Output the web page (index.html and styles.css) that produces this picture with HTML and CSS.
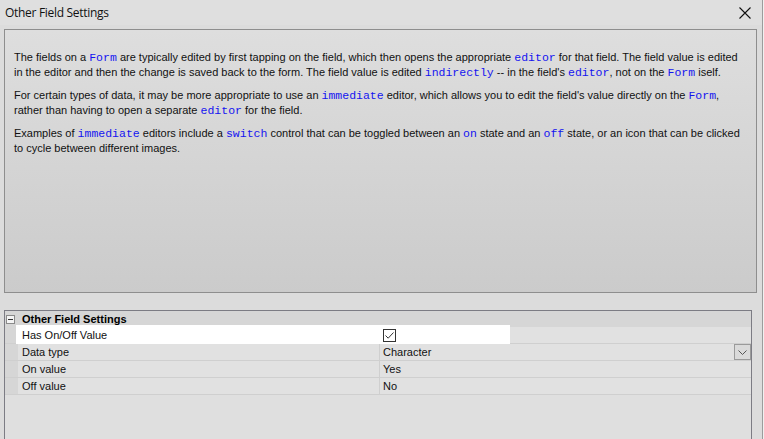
FILE: index.html
```html
<!DOCTYPE html>
<html>
<head>
<meta charset="utf-8">
<link rel="stylesheet" href="styles.css">
</head>
<body>
<div class="window">
  <div class="titlebar">
    <span class="title">Other Field Settings</span>
    <svg class="close" width="12" height="12" viewBox="0 0 12 12"><path d="M0.5 0.5 L11.5 11.5 M11.5 0.5 L0.5 11.5" stroke="#111" stroke-width="1.1" fill="none"/></svg>
  </div>
  <div class="help">
    <p>The fields on a <code>Form</code> are typically edited by first tapping on the field, which then opens the appropriate <code>editor</code> for that field. The field value is edited in the editor and then the change is saved back to the form. The field value is edited <code>indirectly</code> -- in the field's <code>editor</code>, not on the <code>Form</code> iself.</p>
    <p>For certain types of data, it may be more appropriate to use an <code>immediate</code> editor, which allows you to edit the field's value directly on the <code>Form</code>, rather than having to open a separate <code>editor</code> for the field.</p>
    <p>Examples of <code>immediate</code> editors include a <code>switch</code> control that can be toggled between an <code>on</code> state and an <code>off</code> state, or an icon that can be clicked to cycle between different images.</p>
  </div>
  <div class="grid">
    <div class="category">
      <span class="toggle"><span class="minus"></span></span>
      <span class="cat-label">Other Field Settings</span>
    </div>
    <div class="row editing">
      <div class="gutter"></div>
      <div class="name">Has On/Off Value</div>
      <div class="value">
        <svg class="check" width="13" height="13" viewBox="0 0 13 13"><rect x="0.5" y="0.5" width="12" height="12" fill="#fff" stroke="#333"/><path d="M2.5 6.5 L5.2 9.2 L10.5 3.5" stroke="#333" stroke-width="1" fill="none"/></svg>
      </div>
    </div>
    <div class="row">
      <div class="gutter"></div>
      <div class="name">Data type</div>
      <div class="value">Character
        <span class="dropbtn"><svg width="9" height="5" viewBox="0 0 9 5"><path d="M0.5 0.5 L4.5 4.5 L8.5 0.5" stroke="#555" fill="none"/></svg></span>
      </div>
    </div>
    <div class="row">
      <div class="gutter"></div>
      <div class="name">On value</div>
      <div class="value">Yes</div>
    </div>
    <div class="row">
      <div class="gutter"></div>
      <div class="name">Off value</div>
      <div class="value">No</div>
    </div>
  </div>
</div>
</body>
</html>
```
FILE: styles.css
```css
html, body {
  margin: 0;
  padding: 0;
  background: #f0f0f0;
}
.window {
  width: 763px;
  height: 439px;
  box-sizing: border-box;
  border-right: 1px solid #9c9c9c;
  background: #dcdcdc;
  display: flex;
  flex-direction: column;
  overflow: hidden;
  font-family: "Liberation Sans", Arial, sans-serif;
  color: #111;
}
.titlebar {
  height: 25px;
  flex: none;
  display: flex;
  align-items: center;
  justify-content: space-between;
  background: #dfdfdf;
  padding: 0 11px 0 5px;
}
.title {
  font-size: 12px;
  font-family: "Open Sans", "Liberation Sans", sans-serif;
  letter-spacing: -0.3px;
  color: #111;
}
.close {
  display: block;
}
.help {
  margin: 4px 5px 0 4px;
  height: 264px;
  box-sizing: border-box;
  border: 1px solid #8e8e8e;
  background: linear-gradient(#dedede, #cbcbcb);
  padding: 20px 10px 0 9px;
  font-size: 11px;
  line-height: 15px;
  flex: none;
}
.help p {
  margin: 0 0 8px 0;
}
.help code {
  font-family: "Liberation Mono", "Courier New", monospace;
  font-size: 11.5px;
  line-height: 1;
  color: #1414f0;
}
.grid {
  margin: 17px 10px 0 4px;
  flex: 1;
  border: 1px solid #7c7c84;
  border-bottom: none;
  background: #dfdfdf;
  font-size: 11px;
}
.category {
  height: 16px;
  display: flex;
  align-items: center;
  background: #d6d6d6;
}
.toggle {
  width: 9px;
  height: 9px;
  box-sizing: border-box;
  border: 1px solid #8a8a8a;
  background: #f4f4f4;
  margin-left: 1px;
  display: flex;
  align-items: center;
  justify-content: center;
}
.minus {
  width: 5px;
  height: 1px;
  background: #333;
}
.cat-label {
  font-weight: bold;
  margin-left: 7px;
  color: #000;
}
.row {
  display: flex;
  height: 16px;
  border-bottom: 1px solid #cfcfcf;
  position: relative;
}
.gutter {
  width: 13px;
  flex: none;
  background: #d6d6d6;
}
.name {
  width: 357px;
  flex: none;
  padding-left: 4px;
  line-height: 16px;
  border-right: 1px solid #cfcfcf;
  background: #e1e1e1;
  position: relative;
  z-index: 1;
}
.value {
  flex: 1;
  padding-left: 3px;
  line-height: 16px;
  background: #e1e1e1;
  position: relative;
  display: flex;
  align-items: center;
}
.editing .name {
  background: #fff;
  border-right-color: #fff;
}
.editing::after {
  content: "";
  position: absolute;
  left: 11px;
  top: -2px;
  width: 494px;
  height: 21px;
  background: #fff;
  z-index: 0;
}
.check {
  position: relative;
  z-index: 2;
  margin-left: 0;
  margin-top: 1px;
}
.dropbtn {
  position: absolute;
  right: 0;
  top: 0;
  width: 17px;
  height: 16px;
  box-sizing: border-box;
  border: 1px solid #9a9a9a;
  background: #dadada;
  display: flex;
  align-items: center;
  justify-content: center;
}
```
